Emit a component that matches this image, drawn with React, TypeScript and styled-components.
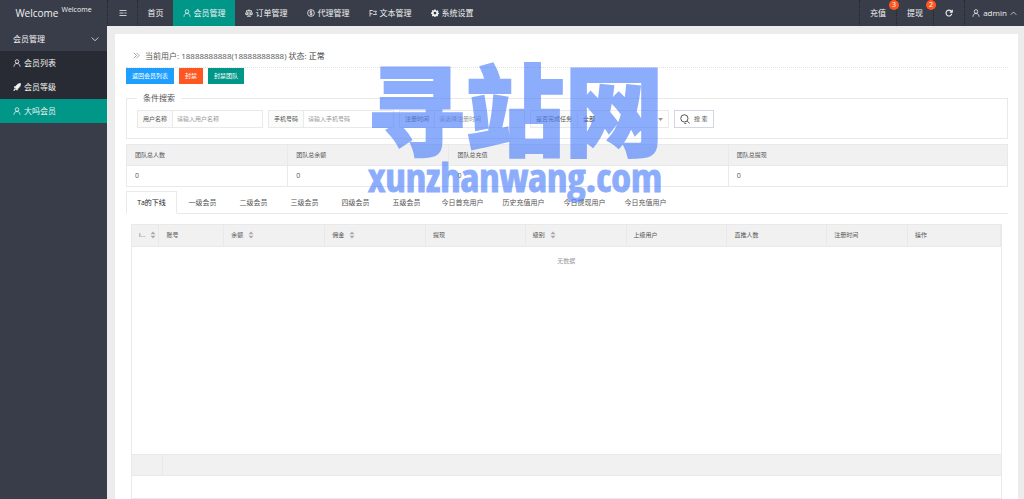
import React from "react";
import styled, { createGlobalStyle } from "styled-components";

const TEAL = "#009688";
const DARK = "#393d49";
const LINE = "#e9e9e9";

const GlobalStyle = createGlobalStyle`
  *, *::before, *::after { box-sizing: border-box; }
  body {
    margin: 0;
    background: #ececec;
    color: #555;
    font-family: "Open Sans", "Noto Sans CJK SC", sans-serif;
    font-size: 8px;
    line-height: 12px;
  }
  button, input, select { font: inherit; color: inherit; }
  a { color: inherit; text-decoration: none; }
  svg { flex: none; }
`;

const Page = styled.div`
  position: relative;
  display: flex;
  flex-direction: column;
  min-height: 100vh;
`;

const Header = styled.header`
  display: flex;
  height: 26px;
  background: ${DARK};
  color: #f2f2f2;
`;

const Logo = styled.div`
  display: flex;
  justify-content: center;
  width: 107px;
  padding-top: 6px;
  font-size: 10px;
  line-height: 14px;
`;

const LogoSup = styled.sup`
  margin-left: 3px;
  font-size: 7px;
  line-height: 8px;
`;

const Nav = styled.nav<{ $right?: boolean }>`
  display: flex;
  margin-left: ${(p) => (p.$right ? "auto" : "0")};
`;

const NavLink = styled.a<{ $width: number; $active?: boolean; $ruled?: boolean }>`
  position: relative;
  display: flex;
  align-items: center;
  justify-content: center;
  gap: 3px;
  width: ${(p) => p.$width}px;
  white-space: nowrap;
  background: ${(p) => (p.$active ? TEAL : "transparent")};
  border-left: ${(p) => (p.$ruled ? "1px dotted #23262e" : "0")};
`;

const Badge = styled.span`
  position: absolute;
  z-index: 1;
  top: 0;
  right: -3px;
  width: 10px;
  height: 10px;
  border-radius: 5px;
  background: #ff5722;
  color: #fff;
  font-size: 7px;
  line-height: 10px;
  text-align: center;
`;

const Shell = styled.div`
  display: flex;
  flex: 1;
`;

const Sidebar = styled.aside`
  width: 107px;
  flex: none;
  background: ${DARK};
  color: #f2f2f2;
`;

const MenuTitle = styled.button`
  display: flex;
  align-items: center;
  justify-content: space-between;
  width: 100%;
  height: 25px;
  padding: 0 8px 0 13px;
  border: 0;
  background: transparent;
`;

const MenuLink = styled.a<{ $active?: boolean }>`
  display: flex;
  align-items: center;
  gap: 3px;
  height: 24px;
  padding-left: 13px;
  background: ${(p) => (p.$active ? TEAL : "#282b33")};
`;

const Main = styled.main`
  display: flex;
  flex: 1;
  min-width: 0;
  padding: 8px 6px 0 8px;
`;

const Card = styled.section`
  display: flex;
  flex: 1;
  flex-direction: column;
  min-width: 0;
  padding: 14px 10px 0 11px;
  background: #fff;
`;

const Crumb = styled.div`
  display: flex;
  align-items: center;
  gap: 5px;
  height: 20px;
  padding: 0 0 4px 7px;
  border-bottom: 1px dotted #e2e2e2;
`;

const Strong = styled.span`
  color: #333;
`;

const Actions = styled.div`
  display: flex;
  gap: 5px;
`;

const Action = styled.button<{ $bg: string }>`
  height: 16px;
  padding: 0 6px;
  border: 0;
  background: ${(p) => p.$bg};
  color: #fff;
  font-size: 6px;
  line-height: 16px;
`;

const SearchBox = styled.fieldset`
  min-width: 0;
  margin: 8px 0 0;
  padding: 0 10px 10px;
  border: 1px solid ${LINE};
`;

const Legend = styled.legend`
  padding: 0 6px;
`;

const SearchRow = styled.form`
  display: flex;
  gap: 5px;
  padding-top: 6px;
`;

const Field = styled.div<{ $width: number }>`
  display: flex;
  align-items: center;
  width: ${(p) => p.$width}px;
  height: 18px;
  border: 1px solid ${LINE};
  font-size: 6px;
`;

const FieldLabel = styled.label`
  flex: none;
  align-self: stretch;
  padding: 0 5px;
  border-right: 1px solid ${LINE};
  background: #fbfbfb;
  line-height: 16px;
`;

const TextInput = styled.input`
  flex: 1;
  min-width: 0;
  padding: 0 4px;
  border: 0;
  outline: 0;
  background: transparent;
  &::placeholder { color: #999; opacity: 1; }
`;

const SelectInput = styled.select`
  flex: 1;
  min-width: 0;
  padding: 0 5px;
  border: 0;
  outline: 0;
  appearance: none;
  background: transparent;
  color: #333;
`;

const Arrow = styled.svg`
  margin-right: 5px;
`;

const SearchButton = styled.button`
  display: flex;
  align-items: center;
  gap: 4px;
  height: 18px;
  padding: 0 5px;
  border: 1px solid #d2d6e2;
  background: #fff;
  font-size: 6px;
  white-space: pre;
`;

const Stats = styled.table`
  width: 100%;
  margin-top: 5px;
  table-layout: fixed;
  border-collapse: collapse;
  th, td {
    height: 21px;
    padding: 0 8px;
    border: 1px solid ${LINE};
    font-size: 7px;
    text-align: left;
    font-weight: 400;
  }
  th {
    background: #f1f1f1;
    font-size: 6px;
  }
`;

const Tabs = styled.div`
  display: flex;
  height: 23px;
  margin-top: 4px;
  border-bottom: 1px solid ${LINE};
`;

const Tab = styled.button<{ $active?: boolean; $wide?: boolean }>`
  width: ${(p) => (p.$wide ? 61 : 51)}px;
  height: 23px;
  padding: 0;
  border: 1px solid ${(p) => (p.$active ? LINE : "transparent")};
  border-bottom-color: ${(p) => (p.$active ? "#fff" : LINE)};
  background: transparent;
  color: ${(p) => (p.$active ? "#222" : "#555")};
  font-size: 7px;
  white-space: nowrap;
`;

const Grid = styled.div`
  display: flex;
  flex: 1;
  flex-direction: column;
  margin: 10px 6px 0 5px;
  border: 1px solid ${LINE};
`;

const DataTable = styled.table`
  width: 100%;
  table-layout: fixed;
  border-collapse: collapse;
  font-size: 6px;
  th {
    height: 21px;
    padding: 0 2px 0 7px;
    border-right: 1px solid ${LINE};
    border-bottom: 1px solid ${LINE};
    background: #f1f1f1;
    text-align: left;
    font-weight: 400;
    white-space: nowrap;
  }
  td {
    height: 30px;
    padding: 0;
    color: #999;
    text-align: center;
  }
`;

const HeadCell = styled.span`
  display: flex;
  align-items: center;
  gap: 5px;
`;

const Totals = styled.div`
  height: 22px;
  margin-top: auto;
  border-top: 1px solid ${LINE};
  border-bottom: 1px solid ${LINE};
  background: #f1f1f1;
`;

const TotalsCell = styled.div`
  width: 31px;
  height: 20px;
  border-right: 1px solid ${LINE};
`;

const Pager = styled.div`
  height: 22px;
`;

const Watermark = styled.div`
  position: absolute;
  top: 55px;
  left: 365px;
  width: 300px;
  color: #5082fa;
  opacity: 0.65;
  text-align: center;
  white-space: nowrap;
  pointer-events: none;
`;

const MarkTitle = styled.div`
  font-family: "Noto Sans CJK SC", sans-serif;
  font-size: 99px;
  font-weight: 900;
  line-height: 100px;
  -webkit-text-stroke: 2px #5082fa;
`;

const MarkSite = styled.div`
  font-family: "Open Sans Condensed", Roboto, sans-serif;
  font-size: 40px;
  font-weight: 700;
  line-height: 44px;
  -webkit-text-stroke: 1px #5082fa;
`;

const icons: Record<string, React.ReactNode> = {
  menu: <path d="M1 3h14M1 13h14M1 8h8M11 8h4" />,
  user: (
    <>
      <circle cx="8" cy="5" r="3.6" />
      <path d="M2 15.5c0-4 2-6.500 6-6.500s6 2.500 6 6.500" />
    </>
  ),
  scale: (
    <path d="M8 1v13M4 14.500h8M2 4l6-1.500L14 4M3.500 4.500L1 10h5zM12.500 4.500L10 10h5zM1 10c.5 2 4.500 2 5 0M10 10c.5 2 4.500 2 5 0" />
  ),
  coin: (
    <>
      <circle cx="8" cy="8" r="6.800" />
      <path d="M10.500 5.500c-1-1.500-5-1.300-5 .700s5 1.500 5 3.600-4 2.200-5 .500M8 3v10" />
    </>
  ),
  flag: <path d="M2 2v13M2 3h5l1.500 1.500H15L13 7.500l2 3.500H8.500L7 9.500H2" />,
  gear: (
    <path
      fill="currentColor"
      fillRule="evenodd"
      stroke="none"
      d="M6.500 1h3l.5 2 1.300.6L13.200 2.500l1.800 2-1 1.900.5 1.200 1.500.4v2l-1.800.6-.7 1.300.9 1.700-1.900 1.600-1.800-1-1.200.5-.5 1.500h-2l-.6-1.700-1.300-.6-1.800.9-1.600-1.900.9-1.800L2 9.900 0 9.400V7l1.900-.5.6-1.300-.9-1.700L3.400 2l1.700.9 1.100-.5zM8 5.300a2.800 2.800 0 100 5.600 2.800 2.800 0 000-5.600z"
    />
  ),
  refresh: <path d="M13.500 9.500A5.800 5.800 0 1112 4l2 2M14.500 1.500V6.500H9.500" strokeWidth="2.200" />,
  rocket: (
    <path
      fill="currentColor"
      d="M15 1C10 1 7 4 5.500 7L2 8l2.500 1.500L6.500 12 8 14.500 9.500 11C13 9 15 6 15 1zM4 11.500c-1.500.5-2 2-2.500 3.500 1.500-.3 3-.8 3.500-2.300z"
    />
  ),
  search: (
    <>
      <circle cx="7" cy="7" r="5.800" />
      <path d="M11.500 11.500L15.500 15M7 15h3" />
    </>
  ),
  down: <path d="M1.500 5L8 11.500 14.500 5" />,
  up: <path d="M1.500 11L8 4.500 14.500 11" />,
  crumb: <path d="M2 2l6 6-6 6M8 2l6 6-6 6" strokeWidth="1.200" />,
};

function Icon({ name, size = 8 }: { name: string; size?: number }) {
  return (
    <svg
      width={size}
      height={size}
      viewBox="0 0 16 16"
      fill="none"
      stroke="currentColor"
      strokeWidth="1.600"
      aria-hidden="true"
    >
      {icons[name]}
    </svg>
  );
}

function SortMark() {
  return (
    <svg width="6" height="8" viewBox="0 0 6 8" fill="#aaa" aria-hidden="true">
      <path d="M3 0.500L5.500 3.200H.5zM3 7.500L.5 4.800h5z" />
    </svg>
  );
}

const navItems = [
  { icon: "user", label: "会员管理", active: true },
  { icon: "scale", label: "订单管理" },
  { icon: "coin", label: "代理管理" },
  { icon: "flag", label: "文本管理" },
  { icon: "gear", label: "系统设置" },
];

const sideItems = [
  { icon: "user", label: "会员列表" },
  { icon: "rocket", label: "会员等级" },
  { icon: "user", label: "大吗会员", active: true },
];

const stats = [
  { label: "团队总人数", width: "18.3%" },
  { label: "团队总余额", width: "18.3%" },
  { label: "团队总充值", width: "31.700%" },
  { label: "团队总提现", width: "31.700%" },
];

const tabs = [
  "Ta的下线", "一级会员", "二级会员", "三级会员", "四级会员", "五级会员",
  "今日首充用户", "历史充值用户", "今日提现用户", "今日充值用户",
];

const columns = [
  { label: "I...", width: 27, sort: true },
  { label: "账号", width: 65 },
  { label: "余额", width: 101, sort: true },
  { label: "佣金", width: 101, sort: true },
  { label: "提现", width: 100 },
  { label: "级别", width: 101, sort: true },
  { label: "上级用户", width: 101 },
  { label: "直推人数", width: 100 },
  { label: "注册时间", width: 81 },
  { label: "操作", width: 93 },
];

const columnTotal = columns.reduce((sum, c) => sum + c.width, 0);

export default function App() {
  return (
    <Page>
      <GlobalStyle />
      <Header>
        <Logo>
          Welcome <LogoSup>Welcome</LogoSup>
        </Logo>
        <Nav>
          <NavLink href="#" $width={30} $ruled aria-label="菜单">
            <Icon name="menu" />
          </NavLink>
          <NavLink href="#" $width={36} $ruled>首页</NavLink>
          {navItems.map((item) => (
            <NavLink href="#" key={item.label} $width={62} $active={item.active}>
              <Icon name={item.icon} />
              {item.label}
            </NavLink>
          ))}
        </Nav>
        <Nav $right>
          <NavLink href="#" $width={37} $ruled>充值<Badge>3</Badge></NavLink>
          <NavLink href="#" $width={37} $ruled>提现<Badge>2</Badge></NavLink>
          <NavLink href="#" $width={31} $ruled aria-label="刷新">
            <Icon name="refresh" />
          </NavLink>
          <NavLink href="#" $width={60} $ruled>
            <Icon name="user" />
            admin
            <Icon name="up" size={7} />
          </NavLink>
        </Nav>
      </Header>
      <Shell>
        <Sidebar>
          <MenuTitle type="button">
            会员管理
            <Icon name="down" />
          </MenuTitle>
          {sideItems.map((item) => (
            <MenuLink href="#" key={item.label} $active={item.active}>
              <Icon name={item.icon} />
              {item.label}
            </MenuLink>
          ))}
        </Sidebar>
        <Main>
          <Card>
            <Crumb>
              <Icon name="crumb" size={7} />
              <span>
                当前用户: 18888888888(18888888888) 状态: <Strong>正常</Strong>
              </span>
            </Crumb>
            <Actions>
              <Action type="button" $bg="#1e9fff">返回会员列表</Action>
              <Action type="button" $bg="#ff5722">封禁</Action>
              <Action type="button" $bg={TEAL}>封禁团队</Action>
            </Actions>
            <SearchBox>
              <Legend>条件搜索</Legend>
              <SearchRow>
                <Field $width={126}>
                  <FieldLabel htmlFor="name">用户名称</FieldLabel>
                  <TextInput id="name" placeholder="请输入用户名称" />
                </Field>
                <Field $width={126}>
                  <FieldLabel htmlFor="phone">手机号码</FieldLabel>
                  <TextInput id="phone" placeholder="请输入手机号码" />
                </Field>
                <Field $width={126}>
                  <FieldLabel htmlFor="time">注册时间</FieldLabel>
                  <TextInput id="time" placeholder="请选择注册时间" />
                </Field>
                <Field $width={139}>
                  <FieldLabel htmlFor="done">是否完成任务</FieldLabel>
                  <SelectInput id="done">
                    <option>全部</option>
                  </SelectInput>
                  <Arrow width="5" height="3" viewBox="0 0 5 3" fill="#999" aria-hidden="true">
                    <path d="M0 0h5L2.500 3z" />
                  </Arrow>
                </Field>
                <SearchButton type="button">
                  <Icon name="search" size={10} />
                  搜 索
                </SearchButton>
              </SearchRow>
            </SearchBox>
            <Stats>
              <colgroup>
                {stats.map((s) => <col key={s.label} width={s.width} />)}
              </colgroup>
              <thead>
                <tr>{stats.map((s) => <th key={s.label}>{s.label}</th>)}</tr>
              </thead>
              <tbody>
                <tr>{stats.map((s) => <td key={s.label}>0</td>)}</tr>
              </tbody>
            </Stats>
            <Tabs role="tablist">
              {tabs.map((label, i) => (
                <Tab
                  key={label}
                  type="button"
                  role="tab"
                  aria-selected={i === 0}
                  $active={i === 0}
                  $wide={i > 5}
                >
                  {label}
                </Tab>
              ))}
            </Tabs>
            <Grid>
              <DataTable>
                <colgroup>
                  {columns.map((c) => (
                    <col key={c.label} width={`${(c.width / columnTotal) * 100}%`} />
                  ))}
                </colgroup>
                <thead>
                  <tr>
                    {columns.map((c) => (
                      <th key={c.label}>
                        <HeadCell>
                          {c.label}
                          {c.sort && <SortMark />}
                        </HeadCell>
                      </th>
                    ))}
                  </tr>
                </thead>
                <tbody>
                  <tr>
                    <td colSpan={columns.length}>无数据</td>
                  </tr>
                </tbody>
              </DataTable>
              <Totals><TotalsCell /></Totals>
              <Pager />
            </Grid>
          </Card>
        </Main>
      </Shell>
      <Watermark>
        <MarkTitle>寻站网</MarkTitle>
        <MarkSite>xunzhanwang.com</MarkSite>
      </Watermark>
    </Page>
  );
}
